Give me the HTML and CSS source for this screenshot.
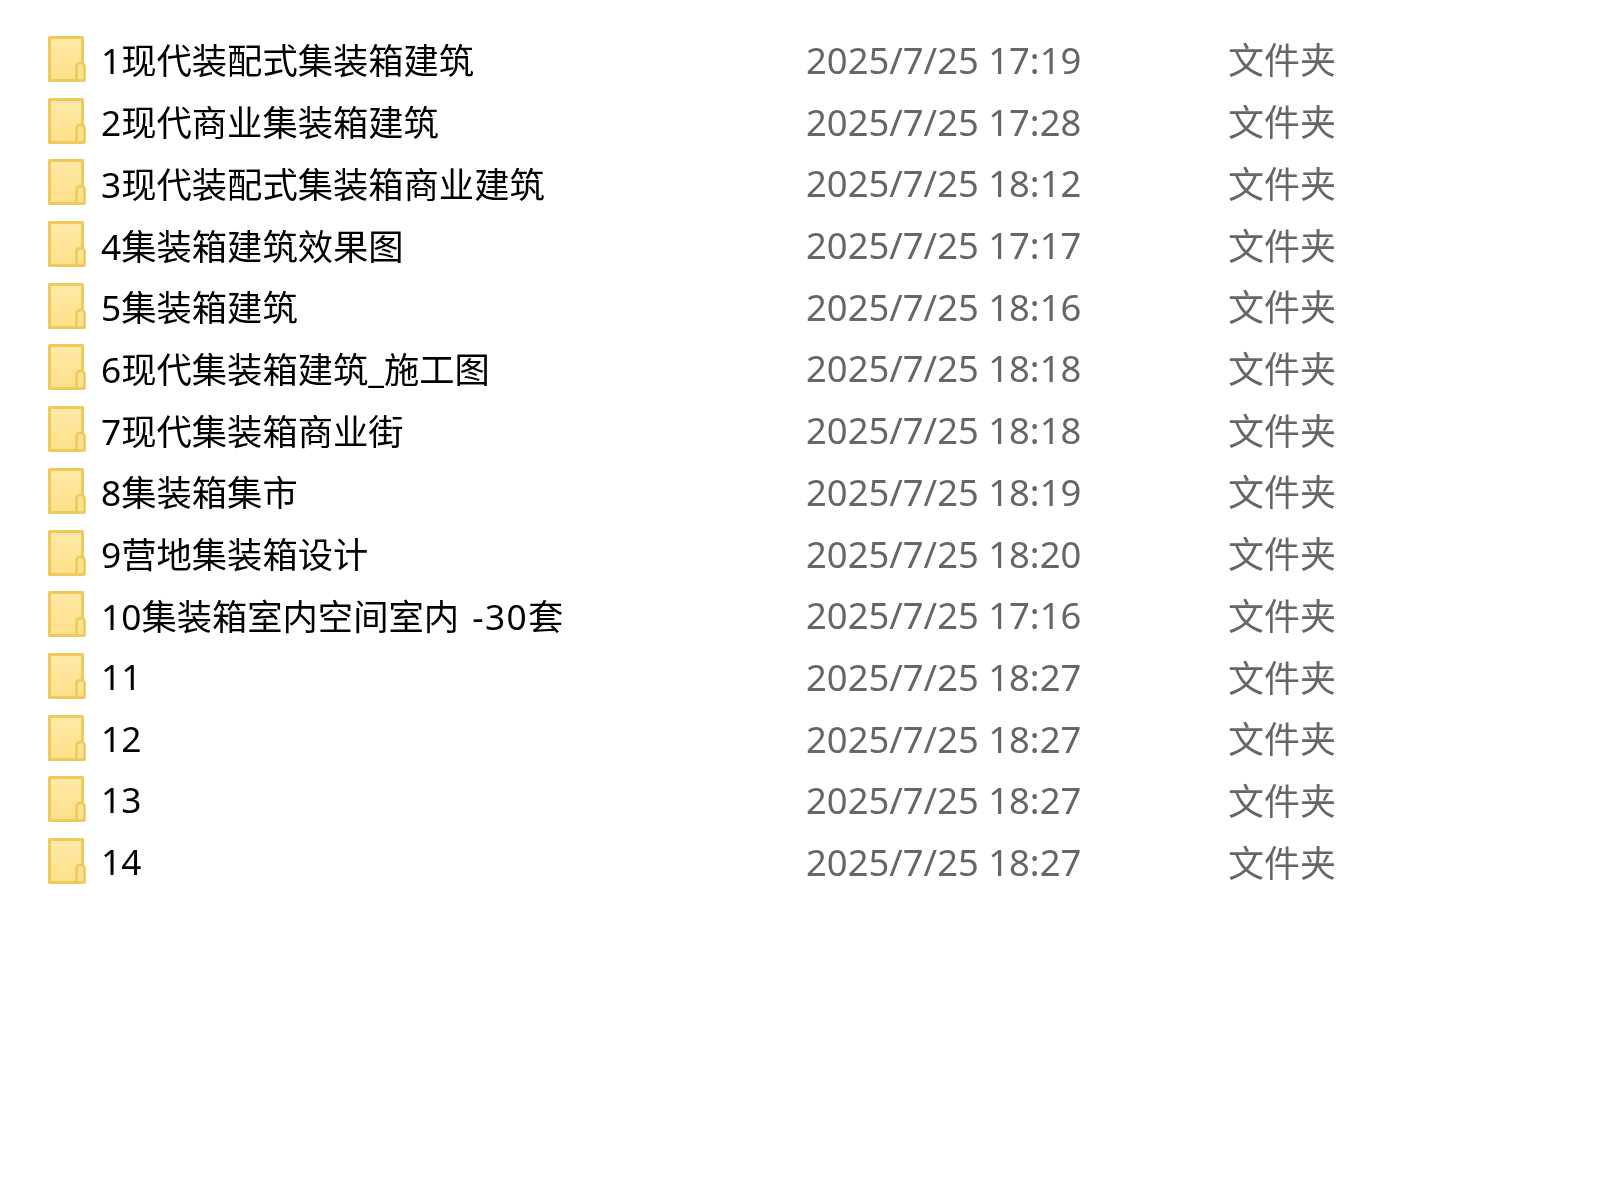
FILE: index.html
```
<!DOCTYPE html>
<html lang="zh-CN">
<head>
<meta charset="utf-8">
<title>文件列表</title>
<link rel="stylesheet" href="styles.css">
</head>
<body>
<svg class="defs" width="0" height="0" aria-hidden="true"><defs>
<linearGradient id="fill" x1="0" y1="0" x2="0" y2="1"><stop offset="0" stop-color="#fee9a8"/><stop offset="1" stop-color="#fde088"/></linearGradient>
<symbol id="folder" viewBox="0 0 38 46">
<path d="M1.5 1.5H34.5V44.5H1.5Z" fill="url(#fill)" stroke="#efc95a" stroke-width="3" stroke-linejoin="round"/>
<path d="M28.5 44.5V30a4 3 0 0 1 8 0V44.5Z" fill="#fde28f" stroke="#efc95a" stroke-width="2.6" stroke-linejoin="round"/>
</symbol></defs></svg>
<main class="list">
<div class="row"><svg class="icon"><use href="#folder"/></svg><span class="name">1现代装配式集装箱建筑</span><span class="date">2025/7/25 17:19</span><span class="type">文件夹</span></div>
<div class="row"><svg class="icon"><use href="#folder"/></svg><span class="name">2现代商业集装箱建筑</span><span class="date">2025/7/25 17:28</span><span class="type">文件夹</span></div>
<div class="row"><svg class="icon"><use href="#folder"/></svg><span class="name">3现代装配式集装箱商业建筑</span><span class="date">2025/7/25 18:12</span><span class="type">文件夹</span></div>
<div class="row"><svg class="icon"><use href="#folder"/></svg><span class="name">4集装箱建筑效果图</span><span class="date">2025/7/25 17:17</span><span class="type">文件夹</span></div>
<div class="row"><svg class="icon"><use href="#folder"/></svg><span class="name">5集装箱建筑</span><span class="date">2025/7/25 18:16</span><span class="type">文件夹</span></div>
<div class="row"><svg class="icon"><use href="#folder"/></svg><span class="name">6现代集装箱建筑_施工图</span><span class="date">2025/7/25 18:18</span><span class="type">文件夹</span></div>
<div class="row"><svg class="icon"><use href="#folder"/></svg><span class="name">7现代集装箱商业街</span><span class="date">2025/7/25 18:18</span><span class="type">文件夹</span></div>
<div class="row"><svg class="icon"><use href="#folder"/></svg><span class="name">8集装箱集市</span><span class="date">2025/7/25 18:19</span><span class="type">文件夹</span></div>
<div class="row"><svg class="icon"><use href="#folder"/></svg><span class="name">9营地集装箱设计</span><span class="date">2025/7/25 18:20</span><span class="type">文件夹</span></div>
<div class="row"><svg class="icon"><use href="#folder"/></svg><span class="name">10集装箱室内空间室内 <span class="suffix">-30</span>套</span><span class="date">2025/7/25 17:16</span><span class="type">文件夹</span></div>
<div class="row"><svg class="icon"><use href="#folder"/></svg><span class="name">11</span><span class="date">2025/7/25 18:27</span><span class="type">文件夹</span></div>
<div class="row"><svg class="icon"><use href="#folder"/></svg><span class="name">12</span><span class="date">2025/7/25 18:27</span><span class="type">文件夹</span></div>
<div class="row"><svg class="icon"><use href="#folder"/></svg><span class="name">13</span><span class="date">2025/7/25 18:27</span><span class="type">文件夹</span></div>
<div class="row"><svg class="icon"><use href="#folder"/></svg><span class="name">14</span><span class="date">2025/7/25 18:27</span><span class="type">文件夹</span></div>
</main>
</body>
</html>
```
FILE: styles.css
```
html, body {
  margin: 0;
  background: #fff;
}
body {
  font-family: "Noto Sans", "Noto Sans CJK SC", sans-serif;
  font-size: 35.3px;
}
.defs {
  display: block;
  height: 0;
}
.list {
  padding: 28px 0 0 48px;
  filter: blur(0.7px);
}
.row {
  display: grid;
  grid-template-columns: 38px 720px 422px 120px;
  align-items: center;
  height: 61.72px;
}
.icon {
  width: 38px;
  height: 46px;
}
.name {
  padding-left: 15px;
  color: #000;
  white-space: nowrap;
}
.suffix {
  margin-left: 4px;
  letter-spacing: 1.3px;
}
.date, .type {
  color: #666;
  white-space: nowrap;
}
.date {
  font-size: 36.4px;
  padding-top: 2px;
}
.type {
  font-size: 36px;
}
```
